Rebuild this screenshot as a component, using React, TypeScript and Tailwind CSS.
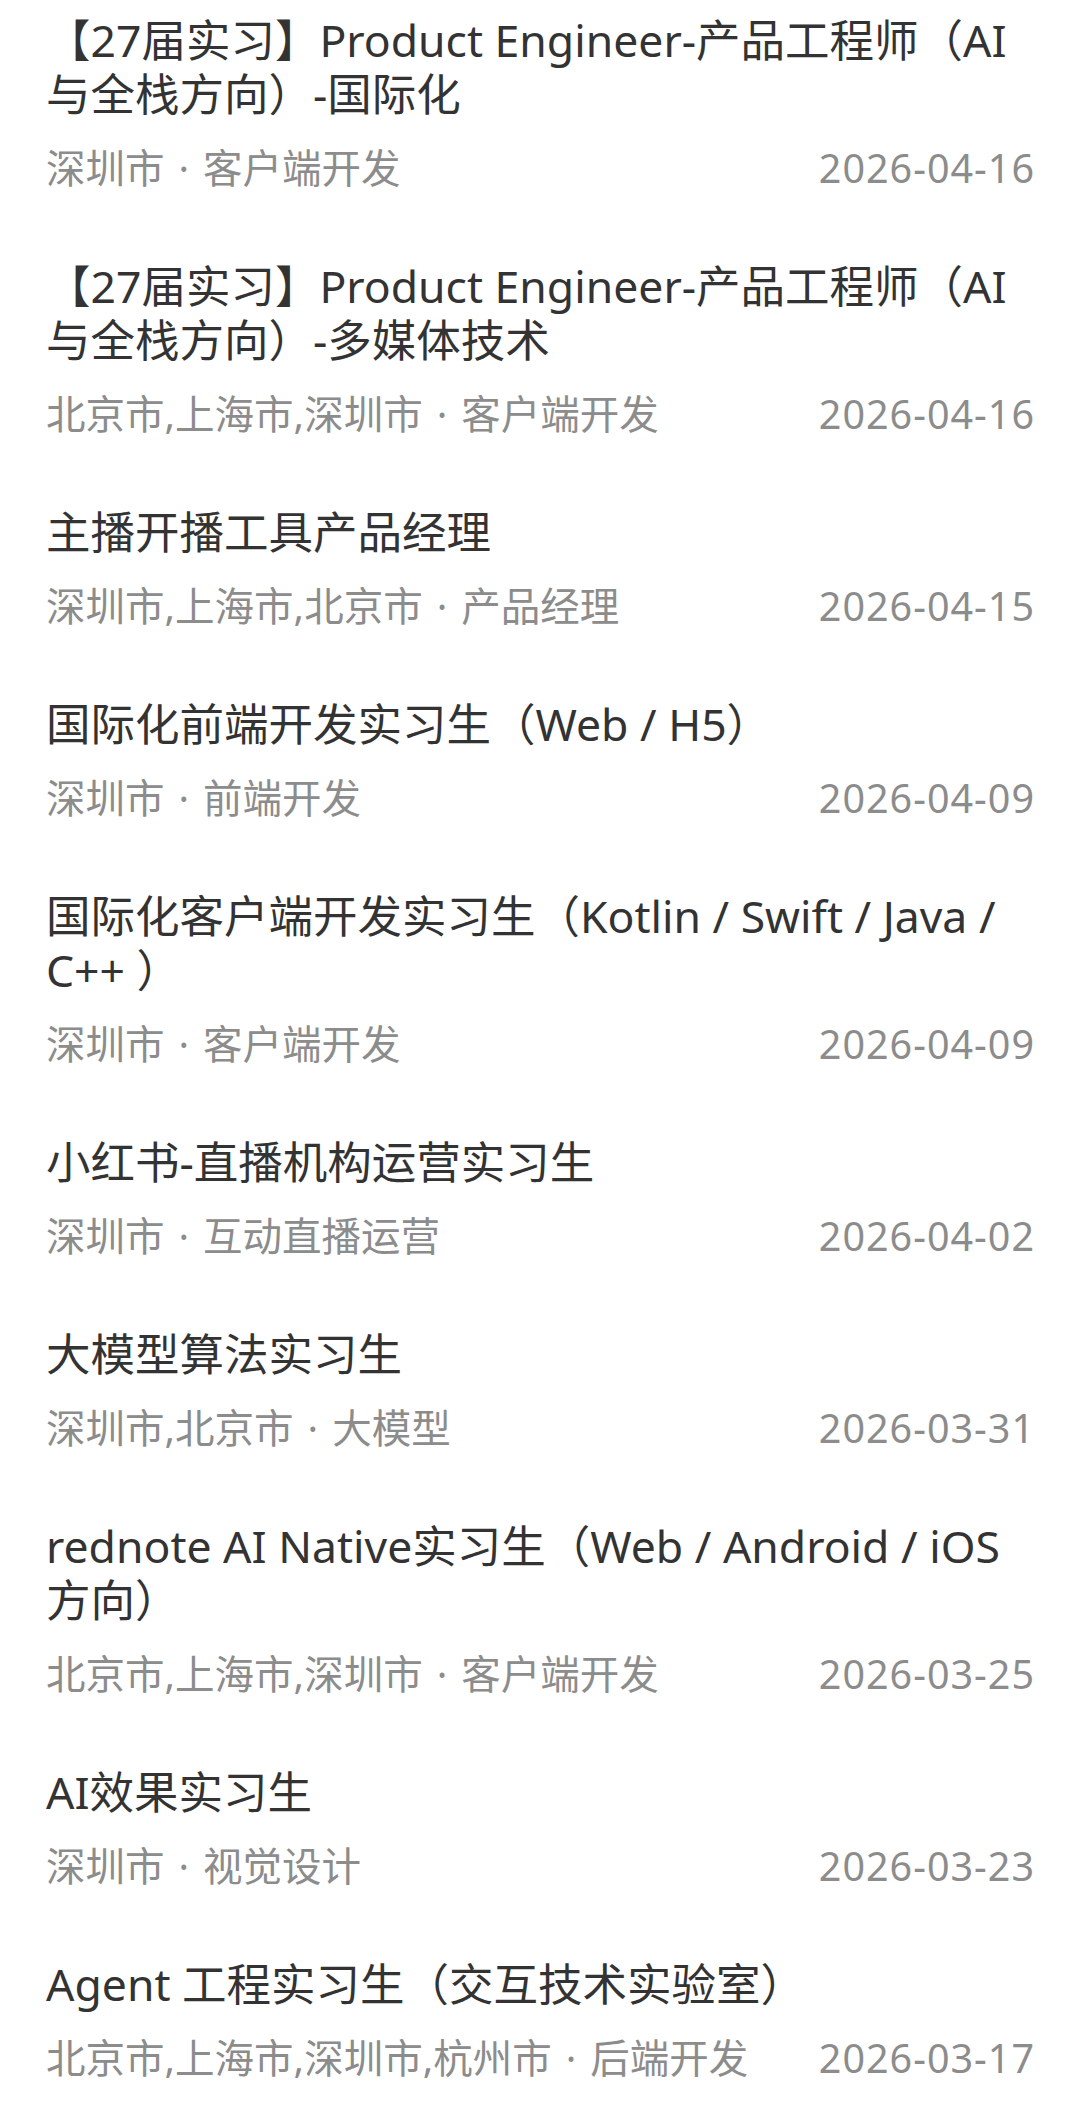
const jobs = [
  {
    title: "【27届实习】Product Engineer-产品工程师（AI与全栈方向）-国际化",
    cities: "深圳市",
    category: "客户端开发",
    date: "2026-04-16",
  },
  {
    title: "【27届实习】Product Engineer-产品工程师（AI与全栈方向）-多媒体技术",
    cities: "北京市,上海市,深圳市",
    category: "客户端开发",
    date: "2026-04-16",
  },
  {
    title: "主播开播工具产品经理",
    cities: "深圳市,上海市,北京市",
    category: "产品经理",
    date: "2026-04-15",
  },
  {
    title: "国际化前端开发实习生（Web / H5）",
    cities: "深圳市",
    category: "前端开发",
    date: "2026-04-09",
  },
  {
    title: "国际化客户端开发实习生（Kotlin / Swift / Java / C++ ）",
    cities: "深圳市",
    category: "客户端开发",
    date: "2026-04-09",
  },
  {
    title: "小红书-直播机构运营实习生",
    cities: "深圳市",
    category: "互动直播运营",
    date: "2026-04-02",
  },
  {
    title: "大模型算法实习生",
    cities: "深圳市,北京市",
    category: "大模型",
    date: "2026-03-31",
  },
  {
    title: "rednote AI Native实习生（Web / Android / iOS方向）",
    cities: "北京市,上海市,深圳市",
    category: "客户端开发",
    date: "2026-03-25",
  },
  {
    title: "AI效果实习生",
    cities: "深圳市",
    category: "视觉设计",
    date: "2026-03-23",
  },
  {
    title: "Agent 工程实习生（交互技术实验室）",
    cities: "北京市,上海市,深圳市,杭州市",
    category: "后端开发",
    date: "2026-03-17",
  },
];

function JobRow({ job }: { job: (typeof jobs)[number] }) {
  return (
    <div className="flex flex-col">
      <p className="pr-[12px] text-[44.5px] leading-[54px] text-[#333333]">
        {job.title}
      </p>
      <div className="mt-[24px] flex items-center justify-between gap-6 text-[39.5px] leading-[46px] text-[#8c8c8c]">
        <span className="whitespace-nowrap">
          {job.cities}
          <span className="px-[14px]">·</span>
          {job.category}
        </span>
        <span className="whitespace-nowrap tracking-[1px]">{job.date}</span>
      </div>
    </div>
  );
}

export default function App() {
  return (
    <div
      className="min-h-screen w-[1080px] bg-white pl-[46px] pr-[45px] pt-[13px]"
      style={{ fontFamily: '"Noto Sans", "Noto Sans CJK SC", sans-serif' }}
    >
      <div className="flex flex-col gap-[68px]">
        {jobs.map((job, i) => (
          <JobRow key={i} job={job} />
        ))}
      </div>
    </div>
  );
}
